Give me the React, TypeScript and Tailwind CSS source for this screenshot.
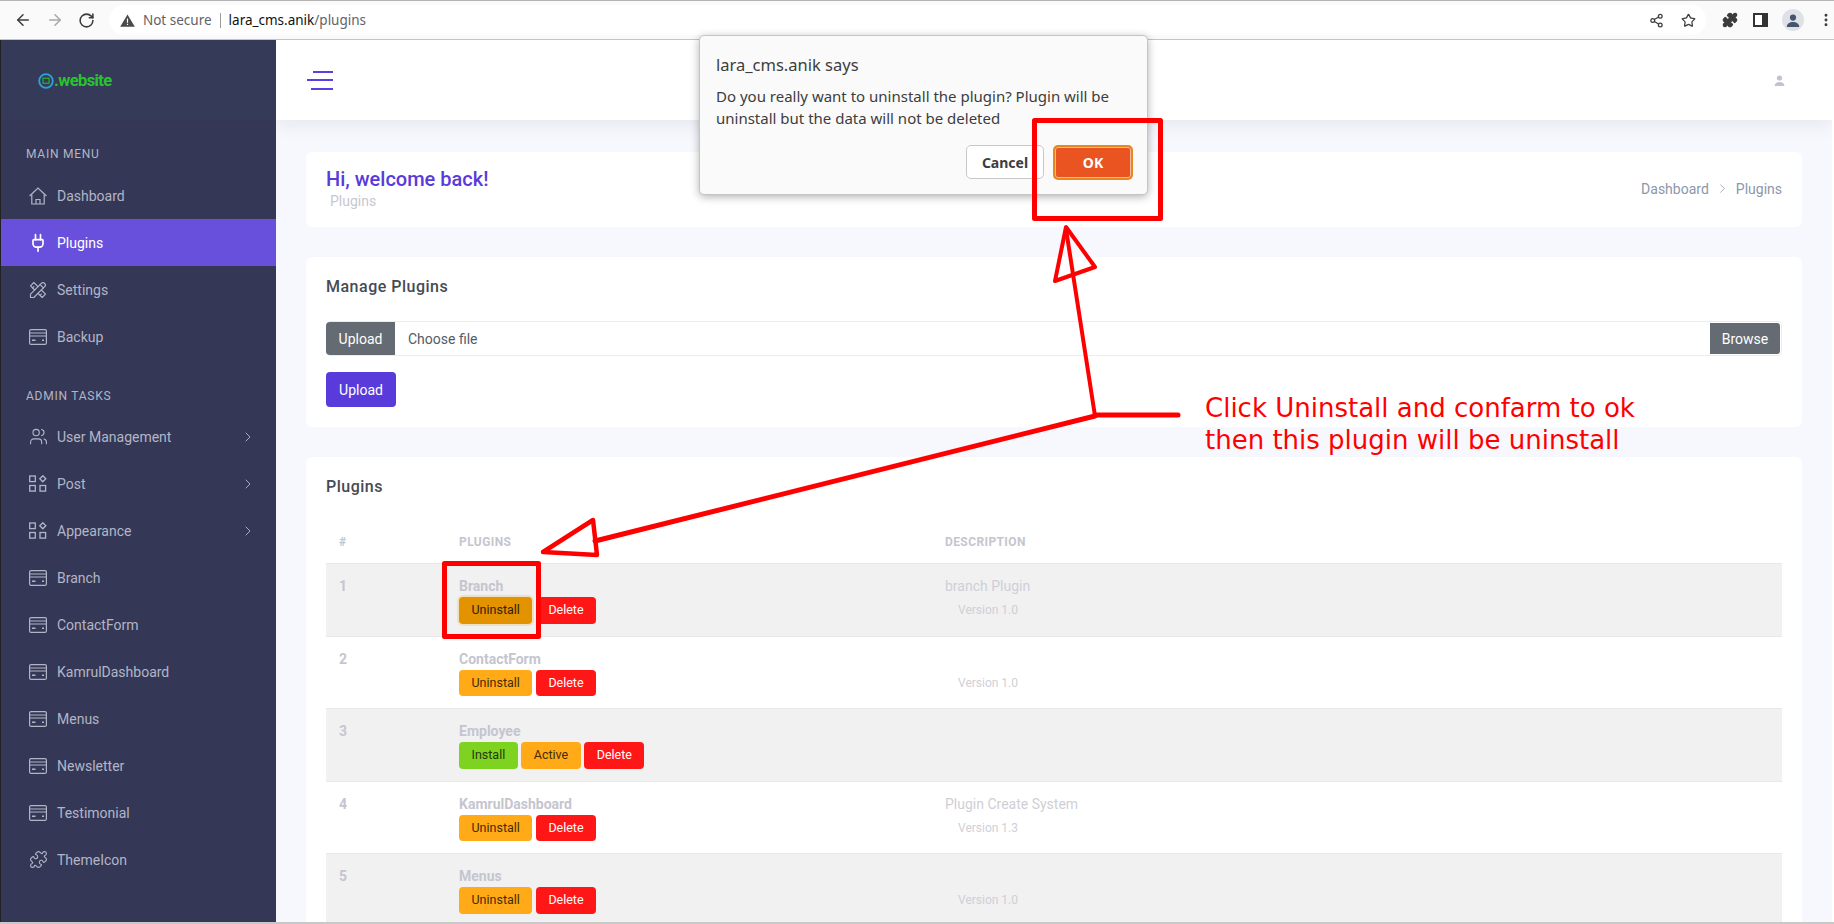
import React from 'react'
import { ArrowLeft, ArrowRight, RotateCw, Share2, Star, MoreVertical, ChevronRight, Plug, Puzzle, Users } from 'lucide-react'
import { TbTools } from 'react-icons/tb'

function CardIcon() {
  return (
    <svg width="18" height="16" viewBox="0 0 18 16" fill="none" stroke="currentColor" strokeWidth="1.2">
      <rect x="0.6" y="0.6" width="16.8" height="14.8" rx="1.5" />
      <path d="M0.6 4h16.8M0.6 7h16.8" />
      <path d="M3 11.3h3.5M13 11.3h2" strokeWidth="1.4" />
    </svg>
  )
}

function AppsIcon() {
  return (
    <svg width="18" height="17" viewBox="0 0 18 17" fill="none" stroke="currentColor" strokeWidth="1.3">
      <rect x="0.7" y="1" width="5.6" height="5.6" />
      <rect x="0.7" y="10.5" width="5.6" height="5.6" />
      <rect x="11" y="10.5" width="5.6" height="5.6" />
      <path d="M13.8 0.8l3 3-3 3-3-3z" />
    </svg>
  )
}

function HomeIcon() {
  return (
    <svg width="18" height="18" viewBox="0 0 18 18" fill="none" stroke="currentColor" strokeWidth="1.2">
      <path d="M0.6 9L9 1l8.4 8" />
      <path d="M2.8 7.5V17h12.4V7.5" />
      <path d="M7 17v-4.5h4V17" />
    </svg>
  )
}

const mainMenu = [
  { label: 'Dashboard', icon: <HomeIcon /> },
  { label: 'Plugins', icon: <Plug size={20} strokeWidth={2} className="-ml-[1px]" />, active: true },
  { label: 'Settings', icon: <TbTools size={20} strokeWidth={1.4} className="-ml-[1px]" /> },
  { label: 'Backup', icon: <CardIcon /> },
]

const adminMenu = [
  { label: 'User Management', icon: <Users size={19} strokeWidth={1.4} />, arrow: true },
  { label: 'Post', icon: <AppsIcon />, arrow: true },
  { label: 'Appearance', icon: <AppsIcon />, arrow: true },
  { label: 'Branch', icon: <CardIcon /> },
  { label: 'ContactForm', icon: <CardIcon /> },
  { label: 'KamrulDashboard', icon: <CardIcon /> },
  { label: 'Menus', icon: <CardIcon /> },
  { label: 'Newsletter', icon: <CardIcon /> },
  { label: 'Testimonial', icon: <CardIcon /> },
  { label: 'ThemeIcon', icon: <Puzzle size={19} strokeWidth={1.4} /> },
]

const rows = [
  { id: 1, name: 'Branch', desc: 'branch Plugin', version: 'Version 1.0', buttons: ['Uninstall*', 'Delete'], shaded: true },
  { id: 2, name: 'ContactForm', desc: '', version: 'Version 1.0', buttons: ['Uninstall', 'Delete'] },
  { id: 3, name: 'Employee', desc: '', version: '', buttons: ['Install', 'Active', 'Delete'], shaded: true },
  { id: 4, name: 'KamrulDashboard', desc: 'Plugin Create System', version: 'Version 1.3', buttons: ['Uninstall', 'Delete'] },
  { id: 5, name: 'Menus', desc: '', version: 'Version 1.0', buttons: ['Uninstall', 'Delete'], shaded: true },
]

function SideItem({ item }: { item: { label: string, icon: React.ReactNode, active?: boolean, arrow?: boolean } }) {
  return (
    <div className={`h-[47px] flex items-center pl-[28px] pr-[20px] text-sm ${item.active ? 'bg-[#6950dc] text-white' : 'text-[#b3b5c6]'}`}>
      <span className="w-[28px] flex items-center">{item.icon}</span>
      <span className="flex-1">{item.label}</span>
      {item.arrow && <ChevronRight size={16} strokeWidth={1.4} />}
    </div>
  )
}

function PluginButton({ label }: { label: string }) {
  const focused = label.endsWith('*')
  const text = label.replace('*', '')
  let color = 'bg-[#ffaa16] text-[#3f2c06]'
  if (text === 'Delete') color = 'bg-[#ff1616] text-white'
  if (text === 'Install') color = 'bg-[#7ed321] text-[#24380a]'
  if (focused) color = 'bg-[#e39200] text-[#2f2105] ring-2 ring-[#f0dfc0]'
  return <button className={`h-[26.5px] px-[12.5px] rounded-[4px] text-[12.5px] leading-none ${color}`}>{text}</button>
}

function Annotations() {
  return (
    <svg className="absolute left-0 top-0 pointer-events-none" width="1834" height="924" fill="none" stroke="#ff0000" strokeLinejoin="round" strokeLinecap="round">
      <rect x="1034.5" y="120.5" width="126" height="98" strokeWidth="5" />
      <rect x="444.5" y="563.5" width="94" height="73" strokeWidth="5" />
      <path d="M1066 227L1055 281L1095 267Z" strokeWidth="4" />
      <path d="M1066 229L1095 416" strokeWidth="4" />
      <path d="M1095 415H1178" strokeWidth="5" />
      <path d="M1095 416L595 541" strokeWidth="5" />
      <path d="M543 552L593 520L597 555Z" strokeWidth="4.5" />
    </svg>
  )
}

export default function App() {
  return (
    <div className="relative w-[1834px] h-[924px] overflow-hidden bg-white font-[Roboto,sans-serif] flex flex-col">
      {/* browser bar */}
      <div className="h-10 shrink-0 bg-[#fafafb] border-t border-t-[#b5b5b5] border-b border-b-[#c4c4c4] flex items-center text-[#3c3c3c] font-['Noto_Sans',sans-serif]">
        <div className="w-[109px] flex items-center pl-[14px] gap-[14px]">
          <ArrowLeft size={18} strokeWidth={2} />
          <ArrowRight size={18} strokeWidth={2} className="text-[#a8a8a8]" />
          <RotateCw size={17} strokeWidth={2.2} />
        </div>
        <div className="w-[1598px] h-[30px] rounded-full bg-white flex items-center pl-[11px] pr-[10px] text-[13.5px]">
          <svg width="15" height="13" viewBox="0 0 15 13" className="mr-[8px]">
            <path d="M7.5 0.5L14.8 12.8H0.2Z" fill="#4a4a4a" />
            <path d="M6.9 4.5h1.2v4.3H6.9zM6.9 9.7h1.2v1.3H6.9z" fill="#fff" />
          </svg>
          <span className="text-[#5f6368]">Not secure</span>
          <span className="w-px h-[15px] bg-[#9a9a9a] mx-[8px]" />
          <span className="text-[#111]">lara_cms.anik</span>
          <span className="text-[#5f6368]">/plugins</span>
          <div className="ml-auto flex items-center gap-[17px]">
            <Share2 size={15} strokeWidth={2} />
            <Star size={15} strokeWidth={2} />
          </div>
        </div>
        <div className="flex-1 flex items-center pl-[16px] gap-[15px]">
          <Puzzle size={16} fill="#3c3c3c" />
          <svg width="15" height="14" viewBox="0 0 15 14">
            <rect x="1" y="1" width="13" height="12" fill="#fff" stroke="#333" strokeWidth="2" />
            <rect x="9" y="1" width="5" height="12" fill="#333" />
          </svg>
          <span className="w-[22px] h-[22px] rounded-full bg-[#dee1e6] flex items-center justify-center -ml-[1px]">
            <svg width="14" height="13" viewBox="0 0 14 13" fill="#46556e">
              <circle cx="7" cy="3.6" r="3.1" />
              <path d="M0.8 13c0-3.4 2.8-5 6.2-5s6.2 1.6 6.2 5z" />
            </svg>
          </span>
          <MoreVertical size={16} strokeWidth={2.4} className="-ml-[1px]" />
        </div>
      </div>

      <div className="flex-1 flex min-h-0 pr-[2px] border-b-2 border-b-[#c8c8c8]">
        {/* sidebar */}
        <aside className="w-[276px] shrink-0 bg-[#343856] border-l border-l-[#222] flex flex-col">
          <div className="h-[80px] shrink-0 bg-[#363a59] flex items-center pl-[37px] pt-[2px]">
            <svg width="16" height="16" viewBox="0 0 16 16" fill="none">
              <circle cx="8" cy="8" r="6.8" stroke="#2aa3d8" strokeWidth="1.8" />
              <rect x="5" y="5.2" width="6" height="5" stroke="#27c32d" strokeWidth="1" />
            </svg>
            <span className="text-[16.5px] font-bold tracking-[-0.6px] text-[#27c32d] leading-none">.website</span>
          </div>
          <div className="pl-[25px] pt-[25px] text-xs tracking-[0.75px] text-[#b3b5c6] leading-[18px] h-[52px]">MAIN MENU</div>
          {mainMenu.map(item => <SideItem key={item.label} item={item} />)}
          <div className="pl-[25px] pt-[26px] text-xs tracking-[0.75px] text-[#b3b5c6] leading-[18px] h-[53px] mt-[1px]">ADMIN TASKS</div>
          <div className="-mt-[1px]">
            {adminMenu.map(item => <SideItem key={item.label} item={item} />)}
          </div>
        </aside>

        {/* page */}
        <main className="flex-1 min-w-0 bg-[#f7f8fd] flex flex-col overflow-hidden">
          <header className="relative h-[80px] shrink-0 bg-white shadow-[0_6px_16px_rgba(60,60,90,0.08)] flex items-center justify-between pl-[31px] pr-[47px]">
            <div className="w-[26px] flex flex-col items-end gap-[6.5px]">
              <span className="block h-[2px] w-[20px] bg-[#5b3fe0]" />
              <span className="block h-[2px] w-[26px] bg-[#5b3fe0]" />
              <span className="block h-[2px] w-[22px] bg-[#5b3fe0]" />
            </div>
            <svg width="11" height="11" viewBox="0 0 11 11" fill="#c3c3d0">
              <circle cx="5.5" cy="3" r="2.6" />
              <path d="M0.6 11c0-2.8 2.2-4 4.9-4s4.9 1.2 4.9 4z" />
            </svg>
          </header>

          <div className="px-[30px] pt-[32px] flex flex-col gap-[30px]">
            <section className="h-[75px] bg-white rounded-md pl-[20px] pr-[20px] flex items-center justify-between">
              <div>
                <h1 className="text-[20px] leading-[24px] font-medium text-[#593bdb] -mt-[2px]">Hi, welcome back!</h1>
                <p className="text-sm leading-[20px] text-[#c7c7d1] pl-[4px]">Plugins</p>
              </div>
              <div className="flex items-center gap-[6px] text-sm text-[#8b97ab] -translate-y-[1px]">
                <span>Dashboard</span>
                <ChevronRight size={15} strokeWidth={1.2} />
                <span>Plugins</span>
              </div>
            </section>

            <section className="h-[170px] bg-white rounded-md px-[20px] pt-[20px]">
              <h2 className="text-base leading-[20px] font-medium tracking-[0.5px] text-[#464a53]">Manage Plugins</h2>
              <div className="mt-[24px] h-[35px] border border-[#ececec] rounded-[4px] flex items-center text-sm">
                <span className="h-[33px] w-[69px] -ml-px bg-[#646b72] rounded-l-[4px] text-white flex items-center justify-center">Upload</span>
                <span className="flex-1 pl-[13px] text-[#555b66]">Choose file</span>
                <span className="h-[31px] w-[70px] mr-[1px] bg-[#646b72] rounded-r-[3px] text-white flex items-center justify-center">Browse</span>
              </div>
              <button className="mt-[16px] h-[35px] w-[70px] bg-[#593bdb] rounded-[4px] text-white text-sm">Upload</button>
            </section>

            <section className="bg-white rounded-md px-[20px] pt-[20px] pb-[20px]">
              <h2 className="text-base leading-[20px] font-medium tracking-[0.5px] text-[#464a53]">Plugins</h2>
              <div className="mt-[26px] h-[40px] pb-[3px] grid grid-cols-[120px_486px_1fr] items-center text-xs font-bold text-[#c5c5d0] tracking-[0.4px]">
                <span className="pl-[13px]">#</span>
                <span className="pl-[13px]">PLUGINS</span>
                <span className="pl-[13px]">DESCRIPTION</span>
              </div>
              {rows.map(row => (
                <div key={row.id} className={`h-[72.5px] border-t border-t-[#e8e8e8] grid grid-cols-[120px_486px_1fr] pt-[12px] text-sm text-[#c5c5d0] ${row.shaded ? 'bg-[#f1f1f1]' : 'bg-white'}`}>
                  <div className="pl-[13px] leading-[20px] font-bold">{row.id}</div>
                  <div className="pl-[13px]">
                    <div className="leading-[20px] font-bold">{row.name}</div>
                    <div className="mt-[1px] flex gap-[3.5px]">
                      {row.buttons.map(b => <PluginButton key={b} label={b} />)}
                    </div>
                  </div>
                  <div className="pl-[13px] text-[#cfcfd6]">
                    <div className="leading-[20px] h-[20px]">{row.desc}</div>
                    <div className="mt-[5px] pl-[13px] text-xs leading-[18px]">{row.version}</div>
                  </div>
                </div>
              ))}
            </section>
          </div>
        </main>
      </div>

      {/* alert dialog */}
      <div className="absolute left-[699px] top-[35px] w-[449px] h-[160px] bg-[#fafafa] border border-[#c4c4c4] rounded-[5px] shadow-[0_2px_8px_rgba(0,0,0,0.3)] px-[16px] pt-[17px] font-['Noto_Sans',sans-serif] text-[#3d3d3d]">
        <div className="text-[16.5px] leading-[24px]">lara_cms.anik says</div>
        <p className="mt-[8px] text-[15px] leading-[22px]">Do you really want to uninstall the plugin? Plugin will be uninstall but the data will not be deleted</p>
        <div className="absolute right-[14px] top-[109px] flex gap-[9px] text-[14px] font-bold">
          <button className="w-[78px] h-[34px] bg-white border border-[#c8c8c8] rounded-[5px]">Cancel</button>
          <button className="w-[80px] h-[35px] bg-[#e95420] border-2 border-[#e8871e] rounded-[5px] text-white outline outline-1 -outline-offset-3 outline-[#f3b79d]">OK</button>
        </div>
      </div>

      <Annotations />

      <div className="absolute left-[1205px] top-[392px] text-[26px] leading-[32px] text-[#ff0000] font-['DejaVu_Sans',sans-serif]">
        Click Uninstall and confarm to ok<br />then this plugin will be uninstall
      </div>
    </div>
  )
}
